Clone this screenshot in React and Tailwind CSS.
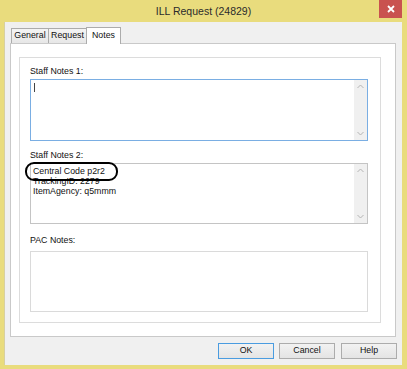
import React from "react";

function Scrollbar() {
  return (
    <div className="absolute right-0 top-0 bottom-0 w-[13px] bg-[#f0f0f0] flex flex-col justify-between items-center py-[4px]">
      <svg width="7" height="5" viewBox="0 0 7 5">
        <path d="M0.5 4 L3.5 1 L6.5 4" fill="none" stroke="#b4b4b4" strokeWidth="1" />
      </svg>
      <svg width="7" height="5" viewBox="0 0 7 5">
        <path d="M0.5 1 L3.5 4 L6.5 1" fill="none" stroke="#b4b4b4" strokeWidth="1" />
      </svg>
    </div>
  );
}

export default function App() {
  return (
    <div
      className="w-[407px] h-[369px] bg-[#e9dc7d] flex flex-col relative text-[#111111]"
      style={{ fontFamily: '"Liberation Sans", Arial, sans-serif' }}
    >
      <div className="h-[22px] flex items-center justify-center text-[10.5px] text-[#2b2b2b] pt-[1px]">
        ILL Request (24829)
      </div>
      <div className="absolute right-[5px] top-0 w-[23px] h-[18px] bg-[#c9524f] flex items-center justify-center">
        <svg width="8" height="8" viewBox="0 0 8 8">
          <path d="M1 1 L7 7 M7 1 L1 7" stroke="#ffffff" strokeWidth="1.8" />
        </svg>
      </div>

      <div className="ml-[4px] mr-[5px] mb-[4px] flex-1 bg-[#f0f0f0] border-l border-[#d8d0a0] pl-[5px] pr-[6px] pt-[5px] pb-[6px] flex flex-col">
        <div className="h-[16px] flex items-end pl-[1px] relative z-10 text-[8.8px]">
          <div className="w-[38px] h-[15px] border border-b-0 border-[#acacac] bg-gradient-to-b from-[#f4f4f4] to-[#e7e7e7] flex items-center justify-center">
            General
          </div>
          <div className="w-[39px] h-[15px] -ml-px border border-b-0 border-[#acacac] bg-gradient-to-b from-[#f4f4f4] to-[#e7e7e7] flex items-center justify-center">
            Request
          </div>
          <div className="w-[35px] h-[17px] -ml-px -mb-px border border-b-0 border-[#acacac] bg-white flex items-center justify-center pb-[1px]">
            Notes
          </div>
        </div>

        <div className="h-[294px] border border-[#c9c9c9] bg-white pt-[13px] pl-[8px]">
          <div className="w-[362px] h-[266px] border border-[#dcdcdc] bg-white pl-[10px] text-[8.8px]">
            <div className="mt-[7px] h-[12px] leading-[12px]">Staff Notes 1:</div>
            <div className="mt-[2px] w-[338px] h-[62px] border border-[#7aaee3] bg-white relative">
              <div className="absolute left-[3px] top-[3px] w-px h-[9px] bg-[#444]" />
              <Scrollbar />
            </div>

            <div className="mt-[8px] h-[12px] leading-[12px]">Staff Notes 2:</div>
            <div className="mt-[2px] w-[338px] h-[61px] border border-[#c4c4c4] bg-white relative pl-[2px] pt-[2px] leading-[10px]">
              <div>Central Code p2r2</div>
              <div>TrackingID: 2279</div>
              <div>ItemAgency: q5mmm</div>
              <Scrollbar />
              <div className="absolute left-[-6px] top-[-2px] w-[93px] h-[19px] border-2 border-black rounded-[9px]" />
            </div>

            <div className="mt-[10px] h-[12px] leading-[12px]">PAC Notes:</div>
            <div className="mt-[5px] w-[338px] h-[61px] border border-[#dadada] bg-white" />
          </div>
        </div>

        <div className="mt-[6px] -mr-px flex justify-end gap-[5px] text-[8.8px]">
          <div className="w-[56px] h-[16px] border border-[#4a9ce0] bg-gradient-to-b from-[#f2f2f2] to-[#e4e4e4] flex items-center justify-center">
            OK
          </div>
          <div className="w-[56px] h-[16px] border border-[#acacac] bg-gradient-to-b from-[#f2f2f2] to-[#e4e4e4] flex items-center justify-center">
            Cancel
          </div>
          <div className="w-[56px] h-[16px] ml-px border border-[#acacac] bg-gradient-to-b from-[#f2f2f2] to-[#e4e4e4] flex items-center justify-center">
            Help
          </div>
        </div>
      </div>
    </div>
  );
}
